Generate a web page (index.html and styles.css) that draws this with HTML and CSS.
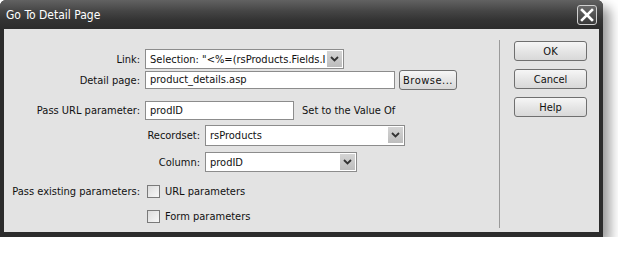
FILE: index.html
```html
<!DOCTYPE html>
<html lang="en">
<head>
    <meta charset="UTF-8">
    <title>Go To Detail Page</title>
    <link rel="stylesheet" href="styles.css">
</head>
<body>
    <div class="window">
        <div class="titlebar">
            <span class="title">Go To Detail Page</span>
            <div class="close-btn">
                <svg width="14" height="14" viewBox="0 0 14 14"><path d="M2 2 L12 12 M12 2 L2 12" stroke="#fff" stroke-width="2.6" stroke-linecap="square"/></svg>
            </div>
        </div>
        <div class="content">
            <div class="form">
                <div class="row row-link">
                    <label class="label">Link:</label>
                    <div class="select select-link">
                        <span class="select-text">Selection: "&lt;%=(rsProducts.Fields.I</span>
                        <span class="arrow"><svg width="9" height="6" viewBox="0 0 9 6"><path d="M1 1 L4.5 4.5 L8 1" fill="none" stroke="#333" stroke-width="1.8"/></svg></span>
                    </div>
                </div>
                <div class="row row-detail">
                    <label class="label">Detail page:</label>
                    <div class="input input-detail">product_details.asp</div>
                    <button class="btn btn-browse">Browse...</button>
                </div>
                <div class="row row-param">
                    <label class="label">Pass URL parameter:</label>
                    <div class="input input-param">prodID</div>
                    <span class="hint">Set to the Value Of</span>
                </div>
                <div class="row row-recordset">
                    <label class="label label-sub">Recordset:</label>
                    <div class="select select-recordset">
                        <span class="select-text">rsProducts</span>
                        <span class="arrow"><svg width="9" height="6" viewBox="0 0 9 6"><path d="M1 1 L4.5 4.5 L8 1" fill="none" stroke="#333" stroke-width="1.8"/></svg></span>
                    </div>
                </div>
                <div class="row row-column">
                    <label class="label label-sub">Column:</label>
                    <div class="select select-column">
                        <span class="select-text">prodID</span>
                        <span class="arrow"><svg width="9" height="6" viewBox="0 0 9 6"><path d="M1 1 L4.5 4.5 L8 1" fill="none" stroke="#333" stroke-width="1.8"/></svg></span>
                    </div>
                </div>
                <div class="row row-existing">
                    <label class="label">Pass existing parameters:</label>
                    <span class="checkbox"></span>
                    <span class="check-text">URL parameters</span>
                </div>
                <div class="row row-form">
                    <span class="label"></span>
                    <span class="checkbox"></span>
                    <span class="check-text">Form parameters</span>
                </div>
            </div>
            <div class="actions">
                <button class="btn btn-action">OK</button>
                <button class="btn btn-action">Cancel</button>
                <button class="btn btn-action">Help</button>
            </div>
        </div>
    </div>
</body>
</html>
```

FILE: styles.css
```css
body {
    margin: 0;
    background: #fff;
    font-family: "DejaVu Sans Condensed", "DejaVu Sans", sans-serif;
    font-size: 11px;
    color: #111;
}
.window {
    width: 603px;
    height: 237px;
    box-sizing: border-box;
    background: #2c2c2c;
    border-radius: 6px 6px 0 0;
    padding: 0 4px 5px 4px;
    box-shadow: 7px 7px 12px rgba(0, 0, 0, 0.4);
    display: flex;
    flex-direction: column;
}
.titlebar {
    height: 29px;
    margin: 0 -4px;
    padding: 0 6px 0 6px;
    border-radius: 6px 6px 0 0;
    background: linear-gradient(#626262, #444 40%, #333 70%, #2c2c2c);
    display: flex;
    align-items: center;
    justify-content: space-between;
}
.title {
    color: #fff;
    font-size: 12px;
    padding-top: 1px;
}
.close-btn {
    width: 18px;
    height: 18px;
    border: 1px solid #d0d0d0;
    border-radius: 3px;
    background: linear-gradient(#6a6a6a, #3a3a3a);
    display: flex;
    align-items: center;
    justify-content: center;
    margin-top: 1px;
}
.content {
    flex: 1;
    background: #e3e3e3;
    display: flex;
}
.form {
    width: 495px;
    padding-top: 20px;
}
.row {
    display: flex;
    align-items: center;
    height: 20px;
    white-space: nowrap;
}
.row-detail { margin-top: 1px; }
.row-param { margin-top: 10px; }
.row-recordset { margin-top: 5px; }
.row-column { margin-top: 7px; }
.row-existing { margin-top: 9px; }
.row-form { margin-top: 5px; }
.label {
    width: 136px;
    text-align: right;
    margin-right: 5px;
    flex-shrink: 0;
}
.label-sub {
    width: 196px;
}
.row-existing .label,
.row-form .label {
    margin-right: 7px;
}
.select {
    height: 20px;
    box-sizing: border-box;
    border: 1px solid #8c8c8c;
    background: #fff;
    display: flex;
    align-items: center;
    padding-left: 4px;
    overflow: hidden;
}
.select-text {
    flex: 1;
    white-space: nowrap;
    overflow: hidden;
}
.arrow {
    width: 15px;
    height: 16px;
    margin-right: 1px;
    background: linear-gradient(#d4d4d4, #bdbdbd);
    display: flex;
    align-items: center;
    justify-content: center;
    flex-shrink: 0;
}
.select-link { width: 199px; }
.select-recordset { width: 200px; height: 21px; }
.select-column { width: 152px; }
.input {
    height: 19px;
    box-sizing: border-box;
    border: 1px solid #8c8c8c;
    background: #fff;
    padding-left: 4px;
    line-height: 17px;
}
.input-detail { width: 250px; height: 18px; line-height: 16px; }
.input-param { width: 149px; }
.hint {
    margin-left: 8px;
}
.btn {
    font-family: "DejaVu Sans Condensed", "DejaVu Sans", sans-serif;
    font-size: 11px;
    color: #111;
    height: 20px;
    box-sizing: border-box;
    border: 1px solid #6f6f6f;
    border-radius: 3px;
    background: linear-gradient(#f6f6f6, #e6e6e6 50%, #d8d8d8);
    padding: 0;
}
.btn-browse {
    width: 58px;
    margin-left: 4px;
    letter-spacing: 0.5px;
}
.checkbox {
    width: 13px;
    height: 13px;
    box-sizing: border-box;
    border: 1px solid #7a7a7a;
    background: linear-gradient(135deg, #dcdcdc, #f8f8f8);
    flex-shrink: 0;
}
.check-text {
    margin-left: 5px;
}
.actions {
    border-left: 1px solid #9a9a9a;
    margin: 11px 0 4px 0;
    padding-left: 14px;
    display: flex;
    flex-direction: column;
    gap: 8px;
    padding-top: 1px;
}
.btn-action {
    width: 73px;
}
```
